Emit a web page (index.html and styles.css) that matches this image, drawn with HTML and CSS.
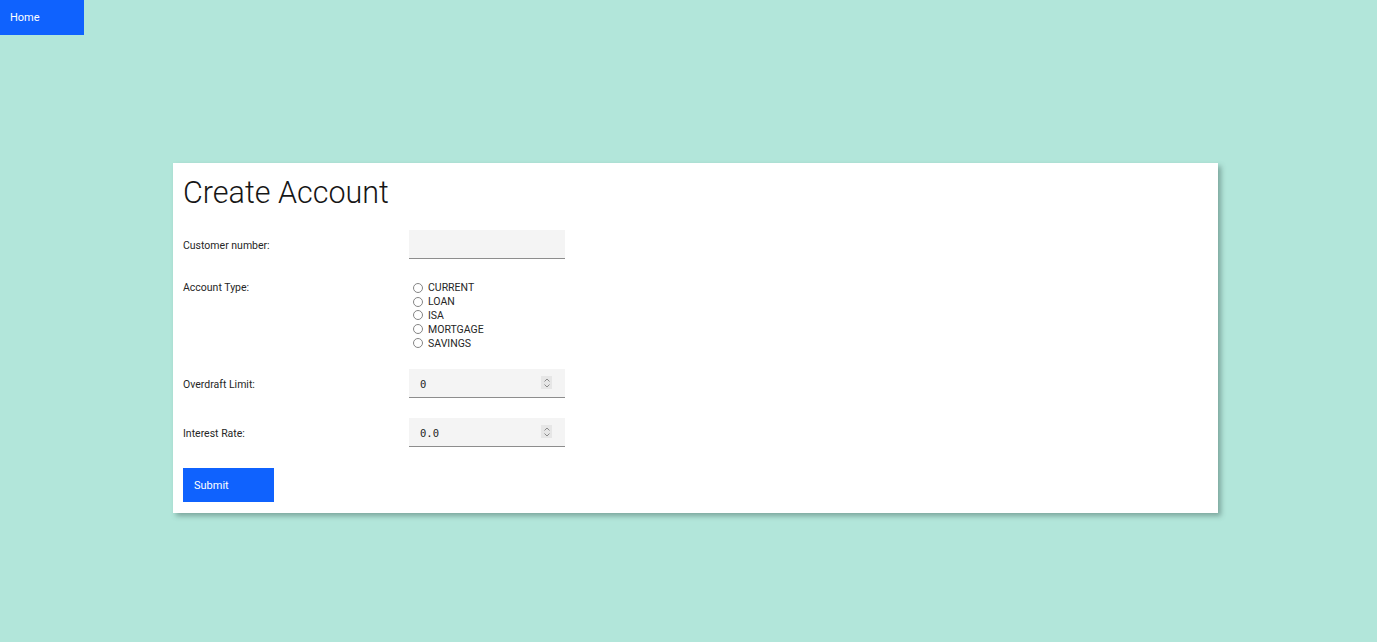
FILE: index.html
```html
<!DOCTYPE html>
<html>
<head>
<meta charset="utf-8">
<link rel="stylesheet" href="styles.css">
</head>
<body>
<nav class="topnav"><a class="home" href="#">Home</a></nav>
<main class="card">
  <h1 class="title">Create Account</h1>
  <form class="form">
    <div class="row">
      <label class="label">Customer number:</label>
      <div class="field"><input class="input" type="text"></div>
    </div>
    <div class="row row-top">
      <label class="label">Account Type:</label>
      <div class="radios">
        <label class="radio"><span class="dot"></span>CURRENT</label>
        <label class="radio"><span class="dot"></span>LOAN</label>
        <label class="radio"><span class="dot"></span>ISA</label>
        <label class="radio"><span class="dot"></span>MORTGAGE</label>
        <label class="radio"><span class="dot"></span>SAVINGS</label>
      </div>
    </div>
    <div class="row">
      <label class="label">Overdraft Limit:</label>
      <div class="field"><input class="input mono" type="text" value="0"><span class="spin"><svg width="8" height="10" viewBox="0 0 8 10"><path d="M1.5 3.5 L4 1 L6.5 3.5 M1.5 6.5 L4 9 L6.5 6.5" fill="none" stroke="#8a8a8a" stroke-width="1"/></svg></span></div>
    </div>
    <div class="row">
      <label class="label">Interest Rate:</label>
      <div class="field"><input class="input mono" type="text" value="0.0"><span class="spin"><svg width="8" height="10" viewBox="0 0 8 10"><path d="M1.5 3.5 L4 1 L6.5 3.5 M1.5 6.5 L4 9 L6.5 6.5" fill="none" stroke="#8a8a8a" stroke-width="1"/></svg></span></div>
    </div>
    <button class="submit" type="button">Submit</button>
  </form>
</main>
</body>
</html>
```
FILE: styles.css
```css
html, body {
  margin: 0;
  padding: 0;
}
body {
  background: #b2e6da;
  font-family: "Roboto", "Noto Sans", sans-serif;
  color: #161616;
  min-height: 642px;
}
.topnav {
  display: flex;
  height: 35px;
}
.home {
  width: 84px;
  background: #0f62fe;
  color: #ffffff;
  font-size: 11px;
  text-decoration: none;
  display: flex;
  align-items: center;
  padding-left: 10px;
  box-sizing: border-box;
}
.card {
  margin: 128px 0 0 173px;
  width: 1045px;
  background: #ffffff;
  box-shadow: 3px 3px 5px rgba(60, 90, 85, 0.45);
  padding: 12px 10px 11px 10px;
  box-sizing: border-box;
}
.title {
  margin: 0;
  font-weight: 300;
  font-size: 30.5px;
  line-height: 36px;
  color: #161616;
}
.form {
  display: flex;
  flex-direction: column;
  gap: 20px;
  margin-top: 19px;
}
.row {
  display: flex;
  align-items: center;
}
.row-top {
  align-items: flex-start;
  padding-top: 2px;
  margin-bottom: -1px;
}
.label {
  width: 226px;
  font-size: 10.5px;
  color: #262626;
  padding-top: 2px;
}
.row-top .label {
  line-height: 14px;
  padding-top: 0;
}
.field {
  display: flex;
  align-items: center;
  width: 156px;
  height: 29px;
  background: #f4f4f4;
  border-bottom: 1px solid #8d8d8d;
  box-sizing: border-box;
}
.input {
  flex: 1;
  min-width: 0;
  height: 100%;
  border: none;
  background: transparent;
  padding: 2px 0 0 11px;
  box-sizing: border-box;
  font-size: 11px;
  outline: none;
  color: #262626;
}
.mono {
  font-family: "DejaVu Sans Mono", monospace;
  font-size: 10.5px;
}
.spin {
  width: 11px;
  height: 13px;
  margin-right: 13px;
  background: #e6e6e6;
  display: flex;
  align-items: center;
  justify-content: center;
}
.radios {
  display: flex;
  flex-direction: column;
  padding-left: 4px;
}
.radio {
  display: flex;
  align-items: center;
  height: 13.8px;
  font-size: 10.5px;
  color: #262626;
  gap: 5px;
}
.dot {
  width: 8px;
  height: 8px;
  border: 1px solid #858585;
  border-radius: 50%;
  box-sizing: content-box;
}
.submit {
  align-self: flex-start;
  width: 91px;
  height: 34px;
  background: #0f62fe;
  color: #ffffff;
  border: none;
  text-align: left;
  padding: 2px 0 0 11px;
  font-family: "Roboto", "Noto Sans", sans-serif;
  font-size: 11px;
  margin-top: 1px;
}
```
